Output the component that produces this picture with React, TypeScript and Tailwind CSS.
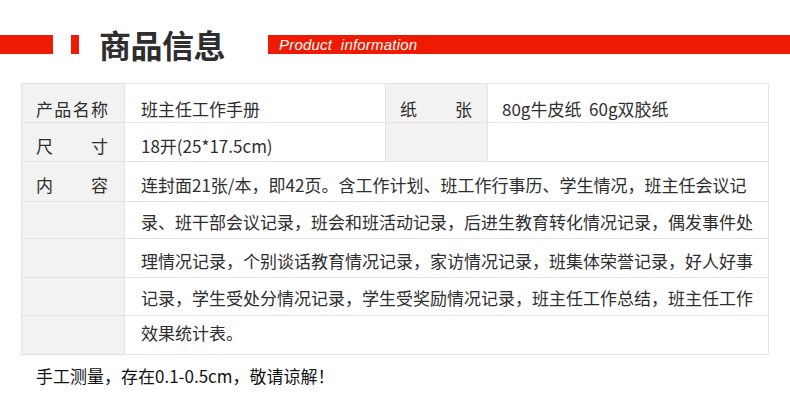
import type { ReactNode } from 'react'

const cjk = "font-['Noto_Sans_CJK_SC',sans-serif]"

const contentLines = [
  { text: '连封面21张/本，即42页。含工作计划、班工作行事历、学生情况，班主任会议记', h: 'h-[40px]', pad: 'pt-[6px]' },
  { text: '录、班干部会议记录，班会和班活动记录，后进生教育转化情况记录，偶发事件处', h: 'h-[37px]', pad: 'pt-[4px]' },
  { text: '理情况记录，个别谈话教育情况记录，家访情况记录，班集体荣誉记录，好人好事', h: 'h-[39px]', pad: 'pt-[5px]' },
  { text: '记录，学生受处分情况记录，学生受奖励情况记录，班主任工作总结，班主任工作', h: 'h-[38px]', pad: 'pt-[3px]' },
  { text: '效果统计表。', h: 'h-[39px]', pad: 'pb-[4px]' },
]

function Label({ chars }: { chars: string[] }) {
  return (
    <div className="w-[72px] flex justify-between text-[17px] text-[#2e2e2e]">
      {chars.map((c, i) => (
        <span key={i}>{c}</span>
      ))}
    </div>
  )
}

function Cell({ children, gray, className = '' }: { children?: ReactNode; gray?: boolean; className?: string }) {
  return (
    <div
      className={`flex items-center border-r border-b border-[#e3e3e3] ${gray ? 'bg-[#f2f2f2]' : 'bg-white'} ${className}`}
    >
      {children}
    </div>
  )
}

export default function App() {
  return (
    <div className={`w-[790px] h-[404px] bg-white overflow-hidden ${cjk}`}>
      {/* header */}
      <div className="flex items-center h-[19px] mt-[35px]">
        <div className="w-[53px] h-full bg-[#ee1b02]" />
        <div className="w-[8px] h-full bg-[#ee1b02] ml-[18px]" />
        <h1 className="ml-[20px] -mt-[2px] text-[32px] font-bold text-[#2e2e2e] leading-none tracking-[-0.5px]">商品信息</h1>
        <div className="ml-[43px] flex-1 h-full bg-[#ee1b02] flex items-center pl-[11px]">
          <span className="font-['Liberation_Sans',sans-serif] italic text-[15px] text-white leading-none tracking-[0.2px]">
            Product&nbsp; information
          </span>
        </div>
      </div>

      {/* table */}
      <div className="mt-[29px] ml-[21px] w-[748px] border-l border-t border-[#e3e3e3] grid grid-cols-[103px_261px_102px_281px]">
        <Cell gray className="h-[39px] pl-[14px] pt-[12px]">
          <Label chars={['产', '品', '名', '称']} />
        </Cell>
        <Cell className="h-[39px] pl-[16px] pt-[12px] text-[17px] text-[#2e2e2e]">班主任工作手册</Cell>
        <Cell gray className="h-[39px] pl-[14px] pt-[12px]">
          <Label chars={['纸', '张']} />
        </Cell>
        <Cell className="h-[39px] pl-[14px] pt-[12px] text-[17px] text-[#2e2e2e]">80g牛皮纸&nbsp; 60g双胶纸</Cell>

        <Cell gray className="h-[39px] pl-[14px] pt-[8px]">
          <Label chars={['尺', '寸']} />
        </Cell>
        <Cell className="h-[39px] pl-[16px] pt-[8px] text-[17px] text-[#2e2e2e]">18开(25*17.5cm)</Cell>
        <Cell gray className="h-[39px]" />
        <Cell className="h-[39px]" />

        {contentLines.map((line, i) => (
          <div key={i} className="contents">
            <Cell gray className={`${line.h} ${line.pad} pl-[14px]`}>
              {i === 0 && <Label chars={['内', '容']} />}
            </Cell>
            <Cell className={`${line.h} ${line.pad} col-span-3 pl-[16px] text-[17px] text-[#2e2e2e] whitespace-nowrap`}>
              {line.text}
            </Cell>
          </div>
        ))}
      </div>

      {/* note */}
      <p className="mt-[8px] ml-[36px] text-[17px] text-[#111]">手工测量，存在0.1-0.5cm，敬请谅解！</p>
    </div>
  )
}
